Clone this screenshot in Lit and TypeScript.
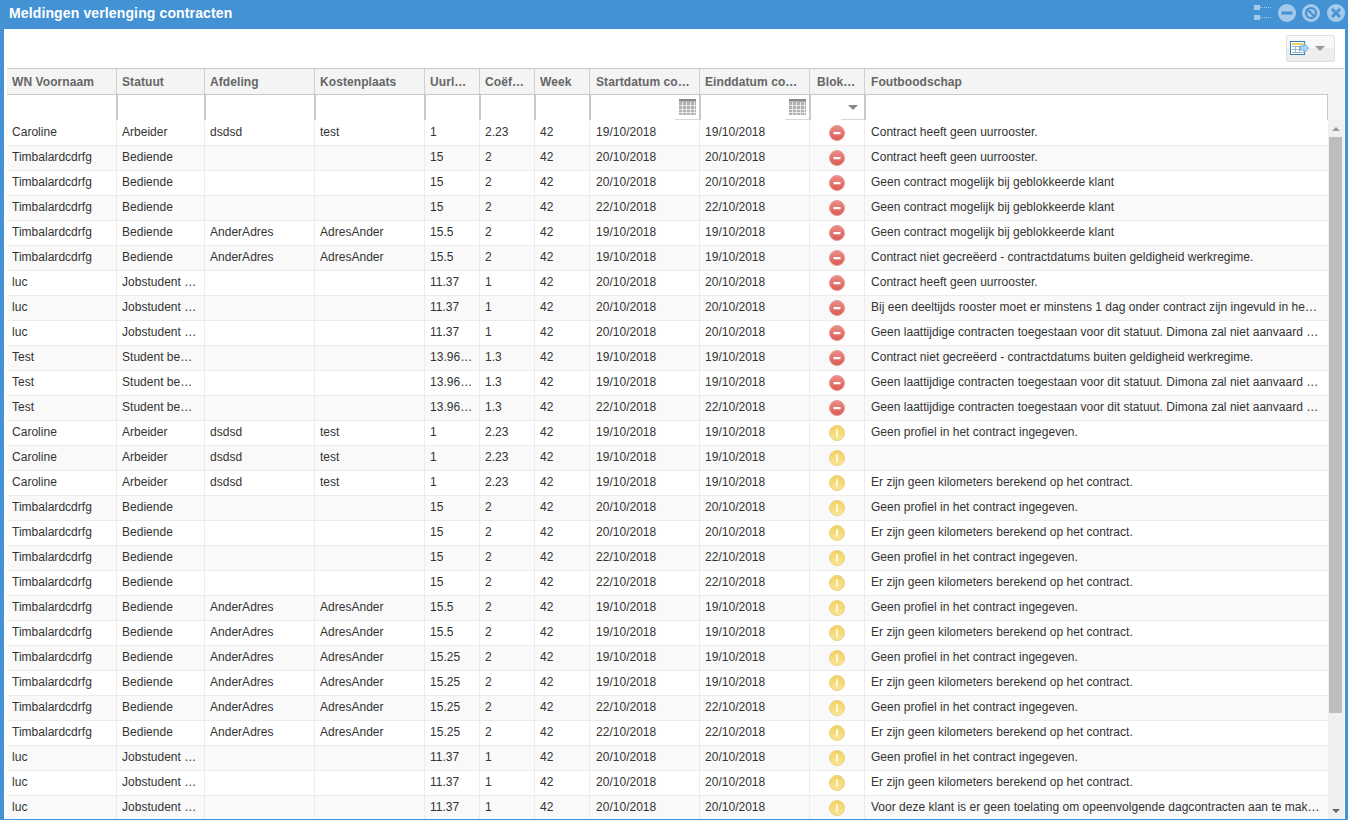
import { LitElement, html, css, svg } from "lit";
import { customElement } from "lit/decorators.js";

type Row = [string, string, string, string, string, string, string, "e" | "w", string];
const G = "Geen contract mogelijk bij geblokkeerde klant";
const U = "Contract heeft geen uurrooster.";
const N = "Contract niet gecreëerd - contractdatums buiten geldigheid werkregime.";
const L = "Geen laattijdige contracten toegestaan voor dit statuut. Dimona zal niet aanvaard …";
const P = "Geen profiel in het contract ingegeven.";
const K = "Er zijn geen kilometers berekend op het contract.";
const T = "Timbalardcdrfg", B = "Bediende", A = "AnderAdres", C = "AdresAnder", J = "Jobstudent …", S = "Student be…", X = "13.96…";
const d19 = "19/10/2018", d20 = "20/10/2018", d22 = "22/10/2018";
const r = (a: string, b: string, c: string, e: string, f: string, g: string, dt: string, k: "e" | "w", m: string): Row =>
  [a, b, c, e, f, g, dt, k, m];
const rows: Row[] = [
  r("Caroline", "Arbeider", "dsdsd", "test", "1", "2.23", d19, "e", U),
  r(T, B, "", "", "15", "2", d20, "e", U),
  r(T, B, "", "", "15", "2", d20, "e", G),
  r(T, B, "", "", "15", "2", d22, "e", G),
  r(T, B, A, C, "15.5", "2", d19, "e", G),
  r(T, B, A, C, "15.5", "2", d19, "e", N),
  r("luc", J, "", "", "11.37", "1", d20, "e", U),
  r("luc", J, "", "", "11.37", "1", d20, "e", "Bij een deeltijds rooster moet er minstens 1 dag onder contract zijn ingevuld in he…"),
  r("luc", J, "", "", "11.37", "1", d20, "e", L),
  r("Test", S, "", "", X, "1.3", d19, "e", N),
  r("Test", S, "", "", X, "1.3", d19, "e", L),
  r("Test", S, "", "", X, "1.3", d22, "e", L),
  r("Caroline", "Arbeider", "dsdsd", "test", "1", "2.23", d19, "w", P),
  r("Caroline", "Arbeider", "dsdsd", "test", "1", "2.23", d19, "w", ""),
  r("Caroline", "Arbeider", "dsdsd", "test", "1", "2.23", d19, "w", K),
  r(T, B, "", "", "15", "2", d20, "w", P),
  r(T, B, "", "", "15", "2", d20, "w", K),
  r(T, B, "", "", "15", "2", d22, "w", P),
  r(T, B, "", "", "15", "2", d22, "w", K),
  r(T, B, A, C, "15.5", "2", d19, "w", P),
  r(T, B, A, C, "15.5", "2", d19, "w", K),
  r(T, B, A, C, "15.25", "2", d19, "w", P),
  r(T, B, A, C, "15.25", "2", d19, "w", K),
  r(T, B, A, C, "15.25", "2", d22, "w", P),
  r(T, B, A, C, "15.25", "2", d22, "w", K),
  r("luc", J, "", "", "11.37", "1", d20, "w", P),
  r("luc", J, "", "", "11.37", "1", d20, "w", K),
  r("luc", J, "", "", "11.37", "1", d20, "w", "Voor deze klant is er geen toelating om opeenvolgende dagcontracten aan te mak…"),
];
const heads = ["WN Voornaam", "Statuut", "Afdeling", "Kostenplaats", "Uurl…", "Coëf…", "Week", "Startdatum co…", "Einddatum co…", "Blok…", "Foutboodschap"];

const calIcon = svg`<svg class="cal" width="17" height="16" viewBox="0 0 17 16"><rect x="0" y="0" width="17" height="2" fill="#8a8a8a"/><rect x="0" y="2" width="17" height="14" fill="#b0b0b0"/><g fill="#e8e8e8"><rect x="3" y="3" width="1" height="13"/><rect x="7" y="3" width="1" height="13"/><rect x="11" y="3" width="1" height="13"/><rect x="15" y="3" width="1" height="13"/><rect x="0" y="6" width="17" height="1"/><rect x="0" y="10" width="17" height="1"/><rect x="0" y="13" width="17" height="1"/></g></svg>`;

const errIcon = svg`<svg width="16" height="16" viewBox="0 0 16 16"><defs><linearGradient id="ge" x1="0" y1="0" x2="0" y2="1"><stop offset="0" stop-color="#ec8d88"/><stop offset="1" stop-color="#dc5a52"/></linearGradient></defs><circle cx="8" cy="8" r="7.5" fill="url(#ge)" stroke="#e39a95" stroke-width="1"/><rect x="4.500" y="7" width="7" height="2.2" rx=".5" fill="#fff"/></svg>`;
const warnIcon = svg`<svg width="16" height="16" viewBox="0 0 16 16"><defs><linearGradient id="gw" x1="0" y1="0" x2="0" y2="1"><stop offset="0" stop-color="#f2d162"/><stop offset="1" stop-color="#fbe596"/></linearGradient></defs><circle cx="8" cy="8" r="7.5" fill="url(#gw)" stroke="#ead07e" stroke-width="1"/><rect x="7" y="4" width="2" height="8" rx=".8" fill="#fff8dc"/></svg>`;

const treeIcon = svg`<svg width="19" height="16" viewBox="0 0 19 16"><g fill="#a5c9e9"><rect x="0" y="0" width="6" height="5"/><rect x="0" y="10" width="6" height="5"/></g><g fill="none" stroke="#a5c9e9" stroke-dasharray="1 1"><path d="M6 2.500H18M6 12.500H18"/></g></svg>`;
const winBtn = (inner: unknown) => svg`<svg width="18" height="18" viewBox="0 0 18 18"><circle cx="9" cy="9" r="9" fill="#a5c9e9"/>${inner}</svg>`;
const minIcon = winBtn(svg`<rect x="3.500" y="7.500" width="11" height="3" fill="#4292d4"/>`);
const maxIcon = winBtn(svg`<circle cx="9" cy="9" r="5" fill="none" stroke="#4292d4" stroke-width="2.2"/><path d="M5 5L13 13" stroke="#4292d4" stroke-width="2.2"/>`);
const closeIcon = winBtn(svg`<path d="M5 5L13 13M13 5L5 13" stroke="#4292d4" stroke-width="2.8"/>`);

const exportIcon = svg`<svg width="20" height="16" viewBox="0 0 20 16"><rect x=".5" y=".5" width="14" height="13" fill="#fff" stroke="#2f7fb8"/><rect x="2" y="2" width="11" height="2" fill="#f1cd66"/><g fill="#9db6ca"><rect x="2" y="5" width="11" height="1"/><rect x="2" y="8" width="11" height="1"/><rect x="2" y="11" width="11" height="1"/><rect x="5" y="5" width="1" height="7"/><rect x="9" y="5" width="1" height="7"/></g><path d="M10 5h4V2l4.500 5-4.500 5V9h-4z" fill="#a9d7f2" stroke="#4a9ed0" stroke-width=".8"/></svg>`;

@customElement("app-root")
export class AppRoot extends LitElement {
  static styles = css`
    :host { display: block; height: 820px; overflow: hidden; font-family: "Liberation Sans", Arial, sans-serif; font-size: 12px; color: #333; }
    .win { height: 820px; box-sizing: border-box; display: flex; flex-direction: column; background: #4292d4; padding: 0 3px 1px 4px; }
    .title { height: 29px; flex: none; display: flex; align-items: center; margin: 0 -3px 0 -4px; padding: 0 3px 3px 9px; box-sizing: border-box; }
    .title h1 { margin: 0; flex: 1; color: #fff; font-size: 14px; font-weight: bold; letter-spacing: .13px; }
    .wbtns { display: flex; align-items: center; gap: 6px; }
    .wbtns svg { display: block; }
    .wbtns .tree { margin-right: -1px; }
    .wbtns .close { margin-left: 1px; }
    .body { flex: 1; min-height: 0; background: #fff; display: flex; flex-direction: column; padding: 0 1px 0 3px; overflow: hidden; }
    .tools { height: 39px; flex: none; display: flex; justify-content: flex-end; align-items: flex-start; padding: 6px 9px 0 0; box-sizing: border-box; }
    .exp { width: 49px; height: 27px; box-sizing: border-box; border: 1px solid #dfdfdf; border-radius: 2px; background: linear-gradient(#f8f8f8 50%, #eeeeee 50%); display: flex; align-items: center; padding-left: 3px; gap: 5px; }
    .exp svg { display: block; }
    .tri { width: 0; height: 0; border-left: 5px solid transparent; border-right: 5px solid transparent; border-top: 5px solid #999; }
    .grid { flex: 1; min-height: 0; display: flex; flex-direction: column; background: #f4f4f4; border-top: 1px solid #c8c8c8; }
    .cols { display: grid; grid-template-columns: 110px 88px 110px 110px 55px 55px 55px 110px 110px 55px 463px; }
    .head { height: 25px; flex: none; }
    .hc { box-sizing: border-box; border-right: 1px solid #d0d0d0; padding: 1px 0 0 5px; line-height: 24px; font-weight: bold; color: #666; white-space: nowrap; overflow: hidden; letter-spacing: .08px; }
    .hc:nth-child(8) { padding-left: 6px; }
    .hc:nth-child(10) { padding-left: 7px; }
    .hc:nth-child(11) { padding-left: 6px; border-right: none; }
    .filters { height: 26px; flex: none; margin-right: 16px; }
    .fc { position: relative; box-sizing: border-box; background: #fff; border-top: 1px solid #c8c8c8; border-right: 1px solid #c8c8c8; border-left: 1px solid #c8c8c8; }
    .fc:first-child { border-left: none; }
    .fc .btn { position: absolute; right: 0; top: 0; bottom: 0; box-sizing: border-box; border-bottom: 1px solid #d8d8d8; display: flex; align-items: center; }
    .fc.date .btn { width: 24px; justify-content: flex-end; padding-right: 3px; }
    .fc.sel .btn { width: 23px; justify-content: center; }
    .fc.sel .tri { border-top-color: #888; }
    .cal { display: block; }
    .list { flex: 1; min-height: 0; display: flex; background: #fff; overflow: hidden; }
    .rows { width: 1321px; flex: none; overflow: hidden; padding-top: 1px; }
    .row { height: 25px; box-sizing: border-box; border-bottom: 1px solid #ececec; background: #fff; }
    .row.alt { background: #f9f9f9; }
    .c { box-sizing: border-box; border-right: 1px solid #ececec; padding: 0 0 0 5px; line-height: 22px; white-space: nowrap; overflow: hidden; color: #333; letter-spacing: .02px; }
    .c:nth-child(8) { padding-left: 6px; }
    .c:last-child { border-right: none; padding-left: 6px; }
    .c.ic { padding: 4px 1px 0 0; display: flex; justify-content: center; }
    .c.ic svg { display: block; }
    .sb { width: 16px; flex: none; background: #f0f0f0; display: flex; flex-direction: column; }
    .sb .up, .sb .dn { height: 17px; flex: none; display: flex; align-items: center; justify-content: center; }
    .sb .up i { width: 0; height: 0; border: 4px solid transparent; border-top: 0; border-bottom: 4px solid #999; }
    .sb .dn i { width: 0; height: 0; border: 4px solid transparent; border-bottom: 0; border-top: 4px solid #666; }
    .sb .thumb { height: 576px; margin: 0 2px 0 1px; background: #bdbdbd; flex: none; }
    .sb .sp { flex: 1; }
  `;

  render() {
    return html`<div class="win">
      <div class="title"><h1>Meldingen verlenging contracten</h1>
        <div class="wbtns"><span class="tree">${treeIcon}</span>${minIcon}${maxIcon}<span class="close">${closeIcon}</span></div>
      </div>
      <div class="body">
        <div class="tools"><div class="exp">${exportIcon}<span class="tri"></span></div></div>
        <div class="grid">
          <div class="cols head">${heads.map((h) => html`<div class="hc">${h}</div>`)}</div>
          <div class="cols filters">${heads.map((_, i) =>
            i === 7 || i === 8
              ? html`<div class="fc date"><span class="btn">${calIcon}</span></div>`
              : i === 9
              ? html`<div class="fc sel"><span class="btn"><span class="tri"></span></span></div>`
              : html`<div class="fc"></div>`
          )}</div>
          <div class="list">
            <div class="rows">${rows.map((row, i) => html`<div class="cols row ${i % 2 ? "alt" : ""}">
              ${row.slice(0, 6).map((v) => html`<div class="c">${v}</div>`)}
              <div class="c">42</div>
              <div class="c">${row[6]}</div>
              <div class="c">${row[6]}</div>
              <div class="c ic">${row[7] === "e" ? errIcon : warnIcon}</div>
              <div class="c">${row[8]}</div>
            </div>`)}</div>
            <div class="sb"><div class="up"><i></i></div><div class="thumb"></div><div class="sp"></div><div class="dn"><i></i></div></div>
          </div>
        </div>
      </div>
    </div>`;
  }
}
